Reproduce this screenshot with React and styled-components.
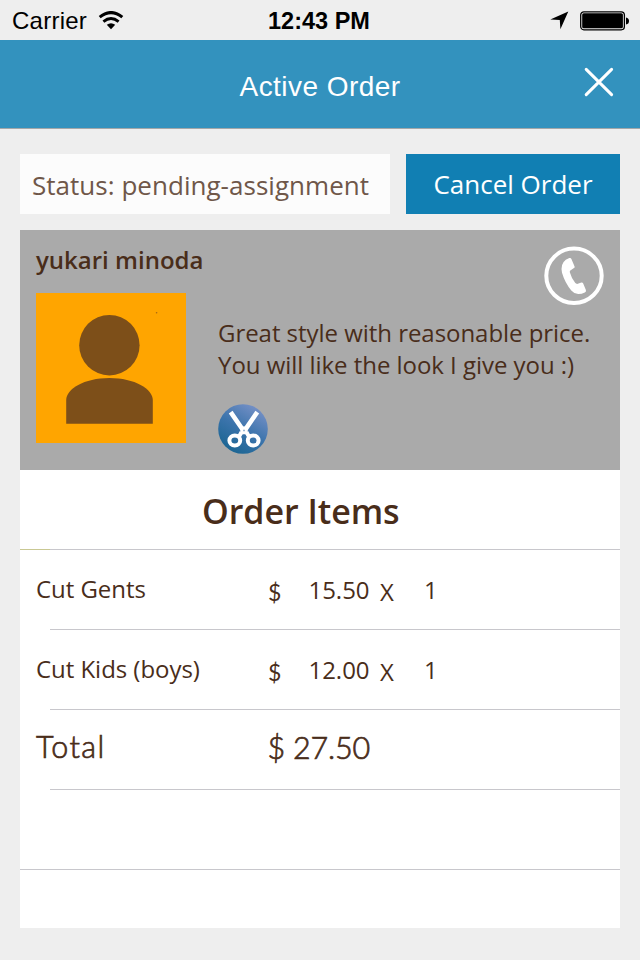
import React from "react";
import styled, { createGlobalStyle } from "styled-components";

const GlobalStyle = createGlobalStyle`
  * { box-sizing: border-box; }
  body { margin: 0; background: #eeeeee; }
`;

const Screen = styled.main`
  width: 640px;
  height: 960px;
  display: flex;
  flex-direction: column;
  overflow: hidden;
  background: #eeeeee;
  color: #492d1a;
  font-family: "Open Sans", sans-serif;
`;

const StatusBar = styled.div`
  height: 40px;
  flex: none;
  display: grid;
  grid-template-columns: 1fr auto 1fr;
  align-items: center;
  padding: 0 11px 0 12px;
  color: #000;
  font: 24px/40px "Liberation Sans", sans-serif;
  svg { display: block; }
`;

const Carrier = styled.div`
  display: flex;
  align-items: center;
  gap: 11px;
  letter-spacing: 0.25px;
  padding-top: 1px;
`;

const Clock = styled.div`
  font-weight: 700;
  font-size: 23.5px;
  padding: 1px 3px 0 0;
`;

const Indicators = styled.div`
  display: flex;
  justify-content: flex-end;
  align-items: center;
  gap: 11px;
`;

const Header = styled.header`
  height: 89px;
  flex: none;
  display: grid;
  grid-template-columns: 1fr auto 1fr;
  background: #3392be;
  border-bottom: 1px solid #a3a7a9;
`;

const Title = styled.h1`
  grid-column: 2;
  margin: 0;
  padding-top: 2px;
  color: #fff;
  font: 400 28px/89px "Liberation Sans", sans-serif;
  letter-spacing: 0.45px;
`;

const CloseButton = styled.button`
  justify-self: end;
  width: 30px;
  height: 30px;
  margin: 27px 26px 0 0;
  padding: 0;
  border: 0;
  background: none;
  svg { display: block; }
`;

const Content = styled.div`
  padding: 25px 20px 0;
`;

const ActionRow = styled.div`
  display: flex;
  gap: 16px;
  height: 60px;
  margin-bottom: 16px;
`;

const OrderStatus = styled.div`
  width: 370px;
  padding: 1px 0 0 12px;
  background: #fcfcfc;
  color: #6f5749;
  font-size: 26px;
  line-height: 60px;
  letter-spacing: 0.03px;
  white-space: nowrap;
`;

const CancelButton = styled.button`
  width: 214px;
  padding: 0;
  border: 0;
  background: #117fb3;
  color: #fff;
  font: 26px/60px "Open Sans", sans-serif;
  white-space: nowrap;
`;

const Profile = styled.section`
  height: 240px;
  padding: 14px 16px;
  display: grid;
  grid-template-columns: 150px 1fr;
  grid-template-rows: 49px 150px;
  column-gap: 32px;
  background: #aaaaaa;
  svg { display: block; }
`;

const ProfileTop = styled.div`
  grid-column: 1 / -1;
  display: flex;
  justify-content: space-between;
  align-items: flex-start;
`;

const Name = styled.h2`
  margin: 0;
  font-size: 24px;
  font-weight: 600;
  line-height: 32px;
`;

const CallButton = styled.button`
  width: 60px;
  height: 60px;
  margin-top: 2px;
  padding: 0;
  border: 0;
  background: none;
`;

const Bio = styled.div`
  padding-top: 24px;
`;

const Quote = styled.p`
  margin: 0 0 23px;
  font-size: 24px;
  line-height: 32px;
  letter-spacing: -0.04px;
  white-space: nowrap;
`;

const Items = styled.section`
  height: 458px;
  background: #fff;
`;

const ItemsTitle = styled.h2`
  height: 80px;
  margin: 0;
  padding-left: 182px;
  background:
    linear-gradient(#c9c893, #c9c893) 0 79px / 30px 1px no-repeat,
    linear-gradient(#c8c7cc, #c8c7cc) 0 79px / 100% 1px no-repeat;
  font-size: 34px;
  font-weight: 600;
  line-height: 82px;
  letter-spacing: -0.05px;
`;

const ItemRow = styled.div`
  height: 80px;
  display: grid;
  grid-template-columns: 232px 40.5px 71.5px 44px 1fr;
  padding-left: 16px;
  font-size: 24px;
  line-height: 78px;
  letter-spacing: -0.04px;
  white-space: nowrap;
  background: linear-gradient(#c8c7cc, #c8c7cc) ${(p) => (p.$full ? 0 : 30)}px 79px / 100% 1px no-repeat;
`;

const ItemAmount = styled.span`
  padding-top: 1px;
`;

const Currency = styled.span`
  padding-top: 3px;
  font-family: Lato, sans-serif;
  font-size: 23px;
`;

const Times = styled.span`
  padding-top: 3px;
`;

const TotalRow = styled(ItemRow)`
  grid-template-columns: 231.5px 1fr;
  font-family: Lato, sans-serif;
  font-size: 30.5px;
  font-weight: 300;
  line-height: 73px;
  -webkit-text-stroke: 0.7px #492d1a;
`;

const TotalLabel = styled.span`
  letter-spacing: 1.4px;
`;

const TotalAmount = styled.span`
  letter-spacing: -0.2px;
  padding-top: 1px;
`;

const WifiIcon = () => (
  <svg width="26" height="20" viewBox="0 0 26 20">
    <path d="M1.7 6.1Q13 -3 24.3 6.1" fill="none" stroke="#000" strokeWidth="3.1" />
    <path d="M5.4 10.6Q13 4.6 20.6 10.6" fill="none" stroke="#000" strokeWidth="2.9" />
    <path d="M8.8 13.8Q13 10.8 17.2 13.8L13 18.3Z" />
  </svg>
);

const LocationIcon = () => (
  <svg width="19" height="19" viewBox="0 0 19 19">
    <path d="M18.3 .5L10.4 18.3L9.8 9L.3 8.4Z" />
  </svg>
);

const BatteryIcon = () => (
  <svg width="49" height="20" viewBox="0 0 49 20">
    <rect x=".7" y=".8" width="43.7" height="18" rx="3.2" fill="none" stroke="#000" strokeWidth="1.3" />
    <rect x="2.2" y="2.3" width="40.7" height="15" rx="1.5" />
    <path d="M46 6.5Q49 7 49 10T46 13.5Z" />
  </svg>
);

const CloseIcon = () => (
  <svg width="30" height="30" viewBox="0 0 30 30">
    <path d="M2.2 2.4L27.6 27.6M27.6 2.4L2.2 27.6" stroke="#fff" strokeWidth="3" strokeLinecap="round" />
  </svg>
);

const PhoneIcon = () => (
  <svg width="60" height="60" viewBox="0 0 60 60">
    <ellipse cx="30" cy="29.8" rx="27.7" ry="27.2" fill="none" stroke="#fff" strokeWidth="4" />
    <path
      d="M21.8 13.8L25.3 12.1Q26.8 11.6 27.4 12.9L30.6 20.4Q31 21.4 30 22L26.3 24.4Q25.5 25.1 25.9 26.4Q27.8 33 31.3 37.1Q32.4 38.2 33.8 37.8L37.4 36.6Q38.6 36.3 39.2 37.6L41.9 44Q42.5 45.6 40.8 46.5Q37.5 48.2 34.2 48.1Q30.2 47.9 27.3 44.5Q21 37 18 26.8Q16.2 18 21.8 13.8Z"
      fill="#fff"
    />
  </svg>
);

const Avatar = () => (
  <svg width="150" height="150" viewBox="0 0 150 150">
    <rect width="150" height="150" fill="#ffa500" />
    <g fill="#7d4f19">
      <circle cx="73.4" cy="52.2" r="30.2" />
      <path d="M30.2 130.7V107C30.2 96 48 85 73.4 85S116.8 96 116.8 107V130.7Z" />
      <circle cx="120.6" cy="19.8" r=".8" opacity=".7" />
    </g>
  </svg>
);

const ScissorsBadge = () => (
  <svg width="50" height="50" viewBox="0 0 25 25">
    <defs>
      <linearGradient id="badge" x1=".2" y1="1" x2=".8" y2="0">
        <stop offset="0" stopColor="#17638f" />
        <stop offset=".5" stopColor="#3c74ac" />
        <stop offset="1" stopColor="#7b93c9" />
      </linearGradient>
    </defs>
    <circle cx="12.5" cy="12.5" r="12.4" fill="url(#badge)" />
    <g fill="none" stroke="#fff">
      <path d="M7 5L11.8 12M19 5L14.2 12" strokeWidth="2.3" strokeLinecap="square" />
      <path d="M12 12H14V14.4H12Z" strokeWidth="1.5" />
      <path d="M11.8 14L10.4 16.5M14.2 14L15.6 16.5" strokeWidth="2" />
      <ellipse cx="8.4" cy="18.2" rx="2.7" ry="2.5" strokeWidth="2" />
      <ellipse cx="17.6" cy="18.2" rx="2.7" ry="2.5" strokeWidth="2" />
    </g>
  </svg>
);

const ORDER = [
  { name: "Cut Gents", price: "15.50", qty: 1 },
  { name: "Cut Kids (boys)", price: "12.00", qty: 1 },
];

export default function App() {
  return (
    <Screen>
      <GlobalStyle />
      <StatusBar>
        <Carrier>Carrier<WifiIcon /></Carrier>
        <Clock>12:43 PM</Clock>
        <Indicators><LocationIcon /><BatteryIcon /></Indicators>
      </StatusBar>
      <Header>
        <Title>Active Order</Title>
        <CloseButton aria-label="Close"><CloseIcon /></CloseButton>
      </Header>
      <Content>
        <ActionRow>
          <OrderStatus>Status: pending-assignment</OrderStatus>
          <CancelButton>Cancel Order</CancelButton>
        </ActionRow>
        <Profile>
          <ProfileTop>
            <Name>yukari minoda</Name>
            <CallButton aria-label="Call"><PhoneIcon /></CallButton>
          </ProfileTop>
          <Avatar />
          <Bio>
            <Quote>Great style with reasonable price.<br />You will like the look I give you :)</Quote>
            <ScissorsBadge />
          </Bio>
        </Profile>
        <Items>
          <ItemsTitle>Order Items</ItemsTitle>
          {ORDER.map((item) => (
            <ItemRow key={item.name}>
              <span>{item.name}</span>
              <Currency>$</Currency>
              <ItemAmount>{item.price}</ItemAmount>
              <Times>X</Times>
              <ItemAmount>{item.qty}</ItemAmount>
            </ItemRow>
          ))}
          <TotalRow>
            <TotalLabel>Total</TotalLabel>
            <TotalAmount>$ 27.50</TotalAmount>
          </TotalRow>
          <ItemRow $full />
        </Items>
      </Content>
    </Screen>
  );
}
